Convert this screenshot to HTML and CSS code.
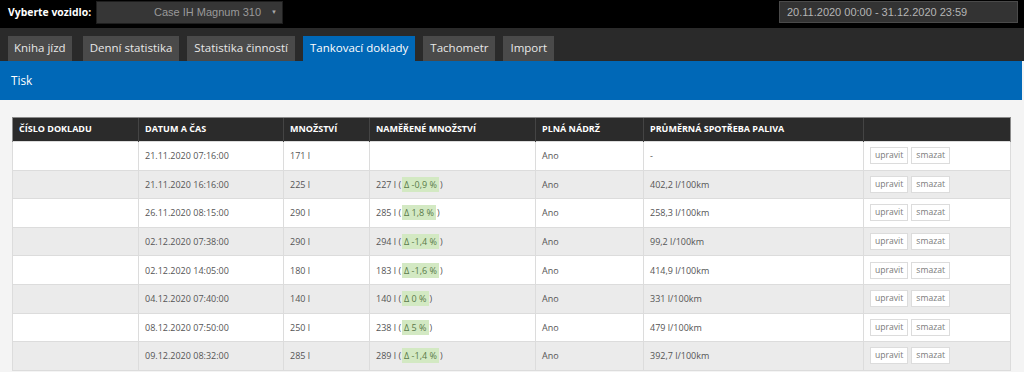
FILE: index.html
```html
<!DOCTYPE html>
<html lang="cs">
<head>
<meta charset="utf-8">
<title>Tankovací doklady</title>
<link rel="stylesheet" href="styles.css">
</head>
<body>
<div class="topbar">
  <label class="veh-label">Vyberte vozidlo:</label>
  <div class="select">
    <span class="select-text">Case IH Magnum 310</span>
    <span class="select-arrow">&#9660;</span>
  </div>
  <div class="spacer"></div>
  <div class="daterange">20.11.2020 00:00 - 31.12.2020 23:59</div>
</div>
<nav class="tabs">
  <a class="tab first">Kniha jízd</a>
  <a class="tab">Denní statistika</a>
  <a class="tab">Statistika činností</a>
  <a class="tab active">Tankovací doklady</a>
  <a class="tab">Tachometr</a>
  <a class="tab">Import</a>
</nav>
<div class="page">
  <div class="toolbar"><span class="print">Tisk</span></div>
  <div class="content">
    <table class="grid">
      <colgroup>
        <col class="c1"><col class="c2"><col class="c3"><col class="c4"><col class="c5"><col class="c6"><col class="c7">
      </colgroup>
      <thead>
        <tr>
          <th>Číslo dokladu</th>
          <th>Datum a čas</th>
          <th>Množství</th>
          <th>Naměřené množství</th>
          <th>Plná nádrž</th>
          <th>Průměrná spotřeba paliva</th>
          <th></th>
        </tr>
      </thead>
      <tbody>
        <tr>
          <td></td><td>21.11.2020 07:16:00</td><td>171 l</td><td></td><td>Ano</td><td>-</td>
          <td><span class="btn">upravit</span><span class="btn">smazat</span></td>
        </tr>
        <tr>
          <td></td><td>21.11.2020 16:16:00</td><td>225 l</td><td>227 l (<span class="delta">Δ -0,9 %</span>)</td><td>Ano</td><td>402,2 l/100km</td>
          <td><span class="btn">upravit</span><span class="btn">smazat</span></td>
        </tr>
        <tr>
          <td></td><td>26.11.2020 08:15:00</td><td>290 l</td><td>285 l (<span class="delta">Δ 1,8 %</span>)</td><td>Ano</td><td>258,3 l/100km</td>
          <td><span class="btn">upravit</span><span class="btn">smazat</span></td>
        </tr>
        <tr>
          <td></td><td>02.12.2020 07:38:00</td><td>290 l</td><td>294 l (<span class="delta">Δ -1,4 %</span>)</td><td>Ano</td><td>99,2 l/100km</td>
          <td><span class="btn">upravit</span><span class="btn">smazat</span></td>
        </tr>
        <tr>
          <td></td><td>02.12.2020 14:05:00</td><td>180 l</td><td>183 l (<span class="delta">Δ -1,6 %</span>)</td><td>Ano</td><td>414,9 l/100km</td>
          <td><span class="btn">upravit</span><span class="btn">smazat</span></td>
        </tr>
        <tr>
          <td></td><td>04.12.2020 07:40:00</td><td>140 l</td><td>140 l (<span class="delta">Δ 0 %</span>)</td><td>Ano</td><td>331 l/100km</td>
          <td><span class="btn">upravit</span><span class="btn">smazat</span></td>
        </tr>
        <tr>
          <td></td><td>08.12.2020 07:50:00</td><td>250 l</td><td>238 l (<span class="delta">Δ 5 %</span>)</td><td>Ano</td><td>479 l/100km</td>
          <td><span class="btn">upravit</span><span class="btn">smazat</span></td>
        </tr>
        <tr>
          <td></td><td>09.12.2020 08:32:00</td><td>285 l</td><td>289 l (<span class="delta">Δ -1,4 %</span>)</td><td>Ano</td><td>392,7 l/100km</td>
          <td><span class="btn">upravit</span><span class="btn">smazat</span></td>
        </tr>
      </tbody>
    </table>
  </div>
</div>
</body>
</html>
```

FILE: styles.css
```css
* { box-sizing: border-box; }
html, body {
  margin: 0;
  padding: 0;
  background: #f4f4f4;
  font-family: "Open Sans", "DejaVu Sans", sans-serif;
  overflow: hidden;
}
.topbar {
  display: flex;
  align-items: center;
  height: 28px;
  background: #000;
  padding: 0 6px 4px 8px;
}
.veh-label {
  color: #fff;
  font-weight: bold;
  font-size: 10.4px;
  margin-right: 4px;
  width: 84px;
}
.select {
  width: 187px;
  height: 23px;
  background: #363636;
  border: 1px solid #1e1e1e;
  display: flex;
  align-items: center;
  justify-content: flex-end;
  padding-right: 5px;
  font-family: "Liberation Sans", Arial, sans-serif;
  font-size: 11px;
  color: #9a9a9a;
}
.select-arrow {
  font-size: 6px;
  margin-left: 10px;
  color: #aaa;
}
.spacer { flex: 1; }
.daterange {
  width: 239px;
  height: 22px;
  background: #333;
  border: 1px solid #4a4a4a;
  display: flex;
  align-items: center;
  padding-left: 7px;
  font-family: "Liberation Sans", Arial, sans-serif;
  font-size: 11px;
  color: #b5b5b5;
}
.tabs {
  display: flex;
  align-items: flex-end;
  gap: 8px;
  height: 33px;
  background: #2a2a2a;
  padding-left: 8px;
}
.tab {
  display: flex;
  align-items: center;
  height: 25px;
  padding: 0 7px 2px;
  background: #4a4a4a;
  color: #e8e8e8;
  font-size: 11.5px;
}
.tab.first { padding: 0 6px 2px; margin-right: 3px; }
.tab.active { background: #0068b7; color: #fff; }
.page { width: 1022px; }
.toolbar {
  height: 39px;
  background: #0068b7;
  display: flex;
  align-items: center;
  padding: 0 11px 1px;
}
.print { color: #fff; font-size: 11.8px; }
.content { padding: 17px 12px 0; }
.grid {
  width: 998px;
  table-layout: fixed;
  border-collapse: collapse;
  font-size: 9px;
}
.c1 { width: 126px; }
.c2 { width: 145px; }
.c3 { width: 86px; }
.c4 { width: 166px; }
.c5 { width: 108px; }
.c6 { width: 220px; }
.c7 { width: 147px; }
.grid thead tr { background: #2b2b2b; }
.grid th {
  height: 24px;
  padding: 0 6px 2px;
  text-align: left;
  color: #fff;
  font-weight: bold;
  text-transform: uppercase;
  font-size: 9px;
  border-left: 1px solid #444;
  border-top: 1px solid #8a8a8a;
  vertical-align: middle;
}
.grid th:first-child { border-left: 1px solid #8a8a8a; }
.grid th:last-child { border-right: 1px solid #8a8a8a; }
.grid td {
  height: 28.6px;
  padding: 0 6px;
  color: #555;
  border: 1px solid #dcdcdc;
  vertical-align: middle;
  white-space: nowrap;
}
.grid tbody tr:nth-child(odd) { background: #fff; }
.grid tbody tr:nth-child(even) { background: #ebebeb; }
.delta {
  background: #d3e9c3;
  color: #5a7a4a;
  padding: 1px 2px;
  margin: 0 1px;
}
.btn {
  display: inline-block;
  height: 17px;
  line-height: 15px;
  padding: 0 4px;
  margin-right: 3px;
  background: #fff;
  border: 1px solid #dcdcdc;
  color: #7a7a7a;
  font-size: 8.6px;
}
```
